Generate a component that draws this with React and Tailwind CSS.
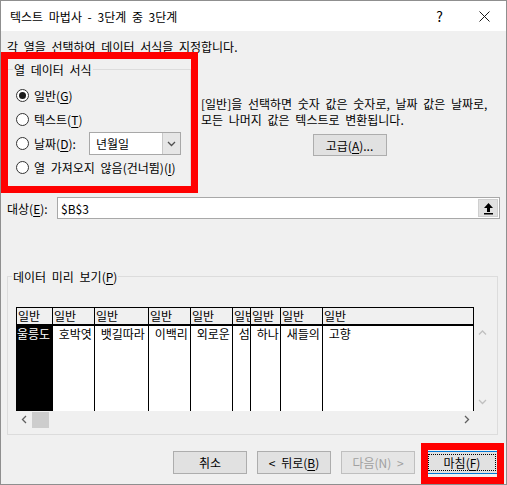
const FONT = "font-['Noto_Sans_CJK_KR','Noto_Sans',sans-serif]"

// mnemonic letter, underlined like a Win32 accelerator
function Mn({ children }) {
  return <span className="underline decoration-1 underline-offset-[2px]">{children}</span>
}

function Chevron({ dir = 'down', color = '#606060', size = 9 }) {
  const pts = {
    down: '1,3 4.5,6.5 8,3',
    up: '1,6.5 4.5,3 8,6.5',
    left: '6,1 2.5,4.5 6,8',
    right: '3,1 6.5,4.5 3,8',
  }[dir]
  return (
    <svg width={size} height={size} viewBox="0 0 9 9">
      <polyline points={pts} fill="none" stroke={color} strokeWidth="1.3" />
    </svg>
  )
}

function Radio({ checked, children }) {
  return (
    <div className="flex h-[24px] items-center">
      <span className="ml-[8px] flex h-[13px] w-[13px] items-center justify-center rounded-full border border-[#333333] bg-white">
        {checked && <span className="h-[7px] w-[7px] rounded-full bg-[#1a1a1a]" />}
      </span>
      <span className="ml-[5px] flex items-center">{children}</span>
    </div>
  )
}

function Button({ children, disabled, primary }) {
  return (
    <div
      className={[
        'flex h-[23px] w-[74px] items-center justify-center border text-[12px] leading-[15px]',
        disabled
          ? 'border-[#bfbfbf] bg-[#e5e5e5] text-[#a0a0a0]'
          : primary
            ? 'border-[#0078d7] bg-[#e1e1e1] p-[2px] text-black'
            : 'border-[#adadad] bg-[#e1e1e1] text-black',
      ].join(' ')}
    >
      {primary ? (
        <span className="flex h-full w-full items-center justify-center border border-dotted border-black">
          {children}
        </span>
      ) : (
        children
      )}
    </div>
  )
}

const columns = [
  { w: 'w-[36px]', v: '울릉도', sel: true },
  { w: 'w-[42px]', v: '\u00a0호박엿' },
  { w: 'w-[54px]', v: '\u00a0뱃길따라' },
  { w: 'w-[42px]', v: '\u00a0이백리' },
  { w: 'w-[42px]', v: '\u00a0외로운' },
  { w: 'w-[18px]', v: '\u00a0섬' },
  { w: 'w-[30px]', v: '\u00a0하나' },
  { w: 'w-[42px]', v: '\u00a0새들의' },
  { w: 'w-[151px]', v: '\u00a0고향' },
]

function Preview() {
  return (
    <div className="ml-[8px] mt-[23px] flex w-[474px] flex-col">
      <div className="flex">
        <div className="flex border-l border-t border-black">
          {columns.map((c, i) => (
            <div key={i} className={`${c.w} flex flex-col overflow-hidden border-r border-black`}>
              <div className="h-[16px] overflow-hidden whitespace-nowrap bg-[#f0f0f0] pl-[1px] text-[12px] leading-[16px]">
                일반
              </div>
              <div
                className={[
                  'h-[87px] overflow-hidden whitespace-nowrap border-t-2 border-black text-[12px] leading-[15px]',
                  c.sel ? 'bg-black text-white' : 'bg-white text-black',
                ].join(' ')}
              >
                {c.v}
              </div>
            </div>
          ))}
        </div>
        <div className="flex w-[16px] flex-col items-center justify-between pb-[5px] pt-[21px]">
          <Chevron dir="up" color="#c0c0c0" />
          <Chevron dir="down" color="#c0c0c0" />
        </div>
      </div>
      <div className="flex h-[17px] w-[458px] items-center">
        <span className="flex w-[16px] justify-center">
          <Chevron dir="left" color="#606060" />
        </span>
        <span className="h-[16px] w-[17px] bg-[#cdcdcd]" />
        <span className="ml-auto flex w-[16px] justify-center">
          <Chevron dir="right" color="#606060" />
        </span>
      </div>
    </div>
  )
}

export default function App() {
  return (
    <div className={`${FONT} relative flex h-[485px] w-[507px] flex-col overflow-hidden border border-[#8f8f8f] bg-[#f0f0f0] text-[12px] leading-[15px] text-black [word-spacing:3px]`}>
      {/* title bar */}
      <div className="flex h-[30px] shrink-0 items-center bg-white pl-[9px]">
        <span className="text-[12px]">텍스트 마법사 - 3단계 중 3단계</span>
        <span className="ml-auto text-[14px] leading-none">?</span>
        <svg className="ml-[36px] mr-[16px]" width="11" height="11" viewBox="0 0 11 11">
          <path d="M0.5 0.5 L10.5 10.5 M10.5 0.5 L0.5 10.5" stroke="#1a1a1a" strokeWidth="1" />
        </svg>
      </div>

      <div className="flex flex-col px-[6px]">
        <div className="mt-[8px]">각 열을 선택하여 데이터 서식을 지정합니다.</div>

        <div className="mt-[8px] flex">
          <fieldset className="w-[184px] border border-[#dcdcdc] pb-[8px] pt-[6px]">
            <legend className="ml-[5px] px-[1px]">열 데이터 서식</legend>
            <Radio checked>
              일반(<Mn>G</Mn>)
            </Radio>
            <Radio>
              텍스트(<Mn>T</Mn>)
            </Radio>
            <Radio>
              <span className="w-[55px]">
                날짜(<Mn>D</Mn>):
              </span>
              <span className="flex h-[23px] w-[92px] items-center border border-[#a8a8a8] bg-white">
                <span className="flex-1 pl-[6px]">년월일</span>
                <span className="flex h-full w-[18px] items-center justify-center border-l border-[#c8c8c8] bg-[#e6e6e6]">
                  <Chevron dir="down" color="#505050" />
                </span>
              </span>
            </Radio>
            <Radio>
              열 가져오지 않음(건너뜀)(<Mn>I</Mn>)
            </Radio>
          </fieldset>

          <div className="ml-[10px] flex flex-1 flex-col">
            <p className="mt-[34px] whitespace-nowrap leading-[16px]">
              [일반]을 선택하면 숫자 값은 숫자로, 날짜 값은 날짜로,
              <br />
              모든 나머지 값은 텍스트로 변환됩니다.
            </p>
            <div className="mt-[6px] flex justify-center pr-[2px]">
              <div className="flex h-[22px] w-[74px] items-center justify-center border border-[#adadad] bg-[#e1e1e1]">
                고급(<Mn>A</Mn>)...
              </div>
            </div>
          </div>
        </div>

        <div className="mt-[9px] flex h-[22px] items-center">
          <span className="w-[50px]">
            대상(<Mn>E</Mn>):
          </span>
          <div className="flex h-[22px] flex-1 items-center border border-[#a8a8a8] bg-white">
            <span className="flex-1 pl-[3px]">$B$3</span>
            <span className="mr-[1px] flex h-[18px] w-[20px] items-center justify-center border border-[#cfcfcf] bg-[#e1e1e1]">
              <svg width="11" height="13" viewBox="0 0 11 13">
                <path d="M5.5 1 L10 6 L7 6 L7 10 L4 10 L4 6 L1 6 Z" fill="#000" />
                <rect x="1" y="11" width="9" height="1.5" fill="#000" />
              </svg>
            </span>
          </div>
        </div>

        <fieldset className="mt-[50px] w-[491px] border border-[#dcdcdc] pb-[6px]">
          <legend className="ml-[4px] px-[1px]">
            데이터 미리 보기(<Mn>P</Mn>)
          </legend>
          <Preview />
        </fieldset>

        <div className="mt-[16px] flex justify-end gap-[10px] pr-[1px]">
          <Button>취소</Button>
          <Button>
            &lt; 뒤로(<Mn>B</Mn>)
          </Button>
          <Button disabled>다음(N) &gt;</Button>
          <Button primary>
            마침(<Mn>F</Mn>)
          </Button>
        </div>
      </div>

      {/* red annotation boxes drawn over the dialog */}
      <div className="pointer-events-none absolute left-0 top-[51px] h-[141px] w-[197px] border-[7px] border-[#ff0000]" />
      <div className="pointer-events-none absolute left-[420px] top-[442px] h-[41px] w-[83px] border-[7px] border-[#ff0000]" />
    </div>
  )
}
